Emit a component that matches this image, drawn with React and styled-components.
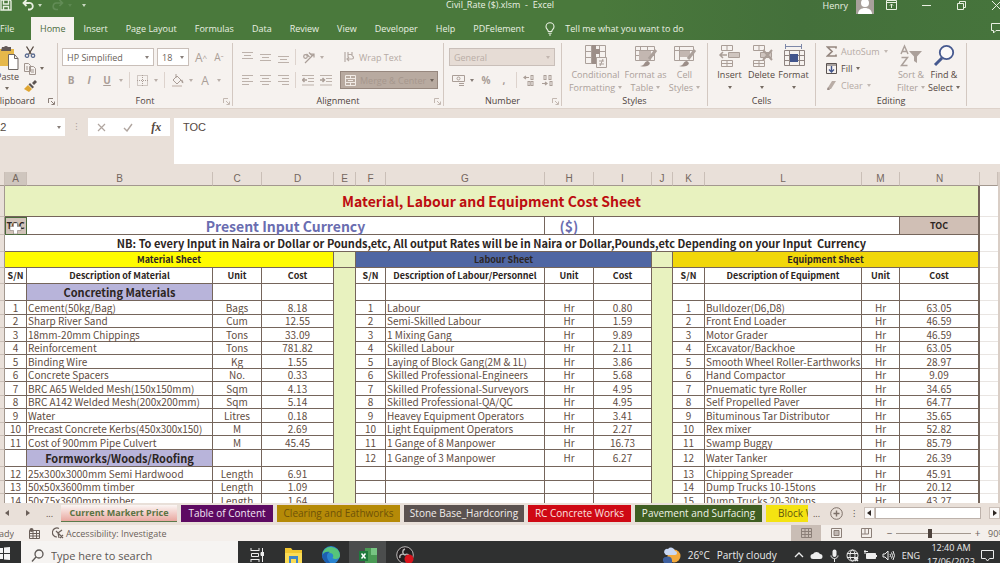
import React from 'react'
import styled, { createGlobalStyle, css } from 'styled-components'

const UI_FONT = '"Open Sans", "Noto Sans", sans-serif'
const SHEET_FONT = '"Noto Sans CJK SC", "Open Sans", sans-serif'

const TABS = ['Insert', 'Page Layout', 'Formulas', 'Data', 'Review', 'View', 'Developer', 'Help', 'PDFelement']

const COLUMNS = [
    ['A', 22], ['B', 186], ['C', 49], ['D', 72], ['E', 22], ['F', 30], ['G', 159],
    ['H', 49], ['I', 58], ['J', 21], ['K', 32], ['L', 157], ['M', 38], ['N', 80],
]

const MATERIALS = [
    ['1', 'Cement(50kg/Bag)', 'Bags', '8.18'],
    ['2', 'Sharp River Sand', 'Cum', '12.55'],
    ['3', '18mm-20mm Chippings', 'Tons', '33.09'],
    ['4', 'Reinforcement', 'Tons', '781.82'],
    ['5', 'Binding Wire', 'Kg', '1.55'],
    ['6', 'Concrete Spacers', 'No.', '0.33'],
    ['7', 'BRC A65 Welded Mesh(150x150mm)', 'Sqm', '4.13'],
    ['8', 'BRC A142 Welded Mesh(200x200mm)', 'Sqm', '5.14'],
    ['9', 'Water', 'Litres', '0.18'],
    ['10', 'Precast Concrete Kerbs(450x300x150)', 'M', '2.69'],
    ['11', 'Cost of 900mm Pipe Culvert', 'M', '45.45'],
    ['', 'Formworks/Woods/Roofing', '', ''],
    ['12', '25x300x3000mm Semi Hardwood', 'Length', '6.91'],
    ['13', '50x50x3600mm timber', 'Length', '1.09'],
    ['14', '50x75x3600mm timber', 'Length', '1.64'],
]

const LABOUR = [
    ['1', 'Labour', 'Hr', '0.80'],
    ['2', 'Semi-Skilled Labour', 'Hr', '1.59'],
    ['3', '1 Mixing Gang', 'Hr', '9.89'],
    ['4', 'Skilled Labour', 'Hr', '2.11'],
    ['5', 'Laying of Block Gang(2M & 1L)', 'Hr', '3.86'],
    ['6', 'Skilled Professional-Engineers', 'Hr', '5.68'],
    ['7', 'Skilled Professional-Surveyors', 'Hr', '4.95'],
    ['8', 'Skilled Professional-QA/QC', 'Hr', '4.95'],
    ['9', 'Heavey Equipment Operators', 'Hr', '3.41'],
    ['10', 'Light Equipment Operators', 'Hr', '2.27'],
    ['11', '1 Gange of 8 Manpower', 'Hr', '16.73'],
    ['12', '1 Gange of 3 Manpower', 'Hr', '6.27'],
]

const EQUIPMENT = [
    ['1', 'Bulldozer(D6,D8)', 'Hr', '63.05'],
    ['2', 'Front End Loader', 'Hr', '46.59'],
    ['3', 'Motor Grader', 'Hr', '46.59'],
    ['4', 'Excavator/Backhoe', 'Hr', '63.05'],
    ['5', 'Smooth Wheel Roller-Earthworks', 'Hr', '28.97'],
    ['6', 'Hand Compactor', 'Hr', '9.09'],
    ['7', 'Pnuematic tyre Roller', 'Hr', '34.65'],
    ['8', 'Self Propelled Paver', 'Hr', '64.77'],
    ['9', 'Bituminous Tar Distributor', 'Hr', '35.65'],
    ['10', 'Rex mixer', 'Hr', '52.82'],
    ['11', 'Swamp Buggy', 'Hr', '85.79'],
    ['12', 'Water Tanker', 'Hr', '26.39'],
    ['13', 'Chipping Spreader', 'Hr', '45.91'],
    ['14', 'Dump Trucks 10-15tons', 'Hr', '20.12'],
    ['15', 'Dump Trucks 20-30tons', 'Hr', '43.27'],
]

const SHEETS = [
    { name: 'Table of Content', width: 92, bg: '#5d0a62', color: '#f3e6f4' },
    { name: 'Clearing and Eathworks', width: 123, bg: '#b58a07', color: '#6e5208' },
    { name: 'Stone Base_Hardcoring', width: 120, bg: '#5b5250', color: '#f2eeec' },
    { name: 'RC Concrete Works', width: 103, bg: '#cf0914', color: '#fbe3e0' },
    { name: 'Pavement and Surfacing', width: 127, bg: '#3f5e22', color: '#eef3e6' },
]

const EMPTY = ['', '', '', '']

function Svg({ w, h, box, children, ...rest }) {
    return (
        <svg width={w} height={h} viewBox={box || `0 0 ${w} ${h}`} fill="none" stroke="currentColor" aria-hidden="true" {...rest}>
            {children}
        </svg>
    )
}

const SaveIcon = () => (
    <Svg w={12} h={12} strokeWidth="1.4">
        <path d="M1 1h9l1 1v9H1z" /><path d="M3.5 1v4h5V1M3.5 11V7.5h5V11" />
    </Svg>
)
const UndoIcon = () => (
    <Svg w={12} h={12} strokeWidth="1.8"><path d="M4.5 1 1.5 4l3 3M2 4h5a3 3 0 0 1 1 6.500H6" /></Svg>
)
const RedoIcon = () => (
    <Svg w={12} h={12} strokeWidth="1.6"><path d="m7.500 1 3 3-3 3M10 4H5a3 3 0 0 0-1 6.500h2" /></Svg>
)
const BulbIcon = () => (
    <Svg w={10} h={14} strokeWidth="1.100">
        <path d="M3.300 9.500C3.300 7.500 1 7 1 4.700a4 4 0 0 1 8 0C9 7 6.700 7.500 6.700 9.500zM3.300 11.300h3.400M4 13h2" />
    </Svg>
)
const PasteIcon = () => (
    <Svg w={20} h={25} stroke="none">
        <path d="M0 4h15v17H0z" fill="#e6b84a" />
        <path d="M3 2h2a2.500 2.500 0 0 1 4 0h3v4H2z" fill="#645a57" />
        <path d="M9.500 9.500h6l3.500 4v11H9.500z" fill="#fff" stroke="#6e6763" />
        <path d="M15.500 9.500v4H19" stroke="#6e6763" />
    </Svg>
)
const CutIcon = () => (
    <Svg w={12} h={12} strokeWidth="1.300">
        <path d="m2.500.5 5 8M9.500.5l-5 8" /><circle cx="3" cy="9.700" r="1.700" stroke="#5f6f93" /><circle cx="9" cy="9.700" r="1.700" stroke="#5f6f93" />
    </Svg>
)
const CopyIcon = () => (
    <Svg w={12} h={12} stroke="#a1958e">
        <path d="M.5.5h4l2 2v6h-6zM5.500 3.500h4l2 2v6h-6z" fill="#f5f1ee" /><path d="M2 4h2M2 6h2M7 7h3M7 9h3" />
    </Svg>
)
const BrushIcon = () => (
    <Svg w={13} h={12} stroke="none">
        <path d="m8 3 3-3 2 2-3 3z" fill="#5b5350" /><path d="m6 3 4 4-1.500 1.500-4-4z" fill="#5b5350" /><path d="m4 5 4 4-3 3-5-3z" fill="#dfa531" />
    </Svg>
)
const LauncherIcon = () => (
    <Svg w={7} h={7}><path d="M.5 5V.5H5M3 3l3 3M6.500 3.500v3h-3" /></Svg>
)
const BordersIcon = () => (
    <Svg w={11} h={11} strokeDasharray="1 1"><path d="M.5.5h10v10H.5zM5.500 0v11M0 5.500h11" /></Svg>
)
const FillColorIcon = () => (
    <Svg w={13} h={13}>
        <path d="m2 6 4-4 4 4-4 4zM5 0v4" /><path d="M10.500 6c1 1.500 1.300 2 1 3" strokeWidth="1.500" /><path d="M1 12h10" stroke="#d9cfc9" strokeWidth="2" />
    </Svg>
)
const AlignIcon = ({ lines }) => (
    <Svg w={11} h={12} stroke="#bdb2ab"><path d={lines} /></Svg>
)
const OrientIcon = () => (
    <Svg w={13} h={13} strokeWidth="1.200">
        <path d="M3 12 12 3M12 6.500V3H8.500" /><circle cx="3.500" cy="5.500" r="1.800" /><path d="m4.500 3 3 3M7 1.500l3 3" />
    </Svg>
)
const IndentIcon = ({ flip }) => (
    <Svg w={12} h={11}>
        <path d="M0 .5h12M6 3.500h6M6 6.500h6M0 10h12" stroke="#bdb2ab" /><path d={flip ? 'M0 5h4M2.500 3l2 2-2 2' : 'M5 5H1M2.500 3l-2 2 2 2'} strokeWidth="1.500" />
    </Svg>
)
const WrapIcon = () => (
    <Svg w={11} h={12} strokeWidth="1.200">
        <path d="M1 1v10M4 3.500h4M4 1v5M8 1v4M3 8h5a1.500 1.500 0 0 0 0-3M5 6 3 8l2 2" />
    </Svg>
)
const MergeIcon = () => (
    <Svg w={11} h={11} stroke="#f1ebe6"><path d="M.5.5h10v10H.5zM.5 3.500h10M.5 7.500h10M5.500 0v3.500M5.500 7.500V11M3 5.500h5" /></Svg>
)
const MoneyIcon = () => (
    <Svg w={13} h={11}>
        <path d="M.5.5h12v6H.5z" /><circle cx="6.500" cy="3.500" r="1.500" /><path d="M7 8.500h5M7 10.500h5" />
    </Svg>
)
const DecimalIcon = ({ flip }) => (
    <Svg w={12} h={11}>
        <path d={flip ? 'M1 8.500h5M4 7l2 1.500L4 10' : 'M6 2.500H1M3 1 1 2.500 3 4'} strokeWidth="1.200" />
        <rect x={flip ? 3 : 8} y=".5" width="2" height="4" /><rect x="8" y={flip ? 0.5 : 6.5} width="2" height="4" /><rect x={flip ? 9 : 5} y="6.500" width="2" height="4" />
    </Svg>
)
const ConditionalIcon = () => (
    <Svg w={24} h={24}>
        <path d="M1.500 1.500h20v18h-20zM1 7.500h20M1 13.500h20M7.500 1v19M15.500 1v19" /><path d="M8 1h4v19H8z" fill="#9c8e88" stroke="none" /><path d="M12 5h4v5h-4z" fill="#9c8e88" stroke="none" />
        <path d="M12.500 13.500h10v10h-10z" fill="#f5f1ee" /><path d="M15 17h5M15 20h5M19 15l-3 7" />
    </Svg>
)
const TableStyleIcon = () => (
    <Svg w={24} h={24}>
        <path d="M1.500 2.500h19v14h-19zM1 6.500h19M1 11.500h19M6.500 2v14M13.500 2v14" /><path d="M5 7h12v9H5z" fill="#c3b7b1" stroke="none" />
        <path d="m22 6-7 9" strokeWidth="3" /><path d="M6 22c5 0 4-5 8-5l2 2c-1 4-6 4-10 3z" fill="#9c8e88" stroke="none" />
    </Svg>
)
const CellStyleIcon = () => (
    <Svg w={24} h={24}>
        <path d="M1.500 2.500h19v14h-19zM1 6.500h19M6.500 2v14" /><path d="M7 7h10v6H7z" fill="#c3b7b1" stroke="none" />
        <path d="m22 6-7 9" strokeWidth="3" /><path d="M6 22c5 0 4-5 8-5l2 2c-1 4-6 4-10 3z" fill="#9c8e88" stroke="none" />
    </Svg>
)
const CellsIcon = ({ kind }) => (
    <Svg w={24} h={24} stroke="#aa9e97">
        <path d="M3.500 1.500h11v5h-11zM9 1v5M3.500 16.500h11v6h-11zM9 16v7M3.500 19.500h11" />
        <path d="M10.500 8.500h11v5h-11z" fill="#cfc5bf" />
        {kind === 'insert' ? <path d="M9 11H2M5 8l-3 3 3 3" strokeWidth="1.500" /> : <path d="m13 6 9 10M22 6l-9 10" strokeWidth="2" />}
    </Svg>
)
const FormatIcon = () => (
    <Svg w={24} h={24} stroke="#8f8480">
        <path d="M2.500 6.500h20v15h-20zM2 11.500h20M2 16.500h20M7.500 6v16M17.500 6v16" /><path d="M8 10h8v8H8z" fill="#42558c" stroke="none" />
        <path d="M3 2.500h17M3.500 0v5M19.500 0v5" stroke="#7d87a8" />
    </Svg>
)
const SigmaIcon = () => <Svg w={11} h={11} strokeWidth="1.700" stroke="#95877f"><path d="M10 2.500V1H1.500L6 5.500 1.500 10H10V8.500" /></Svg>
const FillDownIcon = () => (
    <Svg w={11} h={11}><path d="M.5.5h10v10H.5zM0 2h11" stroke="#5b5350" /><path d="M5.500 3v6M3 6.500 5.500 9 8 6.500" stroke="#42558c" strokeWidth="1.400" /></Svg>
)
const EraserIcon = () => <Svg w={11} h={10} stroke="none"><path d="M6 0h4L5 8H1z" fill="#b9ada6" /><path d="M2 6 4 9H1z" fill="#9c8e88" /></Svg>
const SortIcon = () => (
    <Svg w={24} h={24} strokeWidth="1.500">
        <path d="m2 10 3.500-8L9 10M3 7.500h5M2.500 13.500h6l-6 8h6" /><path d="M10 7h13l-5 5.500V19l-3-2v-4.500z" fill="currentColor" stroke="none" />
    </Svg>
)
const FindIcon = () => (
    <Svg w={24} h={24} stroke="#46598f">
        <circle cx="14.500" cy="8.500" r="6.700" strokeWidth="1.800" fill="#fbf9f8" /><path d="m10 14-7 7" strokeWidth="3" />
    </Svg>
)

function Launcher({ faded }) {
    return <LaunchButton $faded={faded} aria-label="More options"><LauncherIcon /></LaunchButton>
}

function Group({ label, width, launcher, faded, cut, children }) {
    return (
        <RibbonGroup $width={width}>
            <GroupBody>{children}</GroupBody>
            <GroupFooter $cut={cut}>
                <GroupLabel $cut={cut}>{label}</GroupLabel>
                {launcher && <Launcher faded={faded} />}
            </GroupFooter>
        </RibbonGroup>
    )
}

function Large({ icon, lines, caret = true, faded, width }) {
    return (
        <LargeButton $faded={faded} $width={width}>
            {icon}
            <span>{lines[0]}</span>
            <CaretLine>{lines[1]}{caret && <Caret />}</CaretLine>
        </LargeButton>
    )
}

function Ribbon() {
    return (
        <RibbonBar>
            <Group label="Clipboard" width={58} launcher cut>
                <PasteButton>
                    <PasteIcon />
                    <span>Paste</span>
                    <Caret />
                </PasteButton>
                <Stack>
                    <StackButton aria-label="Cut"><CutIcon /></StackButton>
                    <StackButton aria-label="Copy"><CopyIcon /><Caret /></StackButton>
                    <StackButton aria-label="Format Painter"><BrushIcon /></StackButton>
                </Stack>
            </Group>
            <Group label="Font" width={175} launcher faded>
                <Rows>
                    <ToolRow $gap={3}>
                        <SelectBox $width={92}>
                            <select aria-label="Font"><option>HP Simplified</option></select><Caret />
                        </SelectBox>
                        <SelectBox $width={32}>
                            <select aria-label="Font size"><option>18</option></select><Caret />
                        </SelectBox>
                        <Pair>
                            <Tool aria-label="Grow font"><Letter $big>A</Letter><Hat>^</Hat></Tool>
                            <Tool aria-label="Shrink font"><Letter>A</Letter><Hat>ˇ</Hat></Tool>
                        </Pair>
                    </ToolRow>
                    <ToolRow>
                        <Tool><b>B</b></Tool>
                        <Tool><b><i>I</i></b></Tool>
                        <Tool><b><u>U</u></b></Tool>
                        <Drop aria-label="Underline style"><Caret /></Drop>
                        <Rule />
                        <Tool aria-label="Borders"><BordersIcon /></Tool>
                        <Drop aria-label="Border style"><Caret /></Drop>
                        <Rule />
                        <Tool aria-label="Fill colour"><FillColorIcon /></Tool>
                        <Drop aria-label="Fill colours"><Caret /></Drop>
                        <Tool aria-label="Font colour"><Letter $big>A</Letter></Tool>
                        <Drop aria-label="Font colours"><Caret /></Drop>
                    </ToolRow>
                </Rows>
            </Group>
            <Group label="Alignment" width={211} launcher faded>
                <Rows $width={102}>
                    <ToolRow>
                        <Tool aria-label="Top align"><AlignIcon lines="M0 1.500h11M2 4.500h7M0 7.500h11" /></Tool>
                        <Tool aria-label="Middle align"><AlignIcon lines="M0 3.500h11M2 6.500h7M0 9.500h11" /></Tool>
                        <Tool aria-label="Bottom align"><AlignIcon lines="M0 5.500h11M2 8.500h7M0 11.500h11" /></Tool>
                        <Rule />
                        <Tool aria-label="Orientation"><OrientIcon /></Tool>
                        <Drop aria-label="Orientation options"><Caret /></Drop>
                    </ToolRow>
                    <ToolRow>
                        <Tool aria-label="Align left"><AlignIcon lines="M0 1.500h11M0 4.500h7M0 7.500h11M0 10.500h7" /></Tool>
                        <Tool aria-label="Centre"><AlignIcon lines="M0 1.500h11M2 4.500h7M0 7.500h11M2 10.500h7" /></Tool>
                        <Tool aria-label="Align right"><AlignIcon lines="M0 1.500h11M4 4.500h7M0 7.500h11M4 10.500h7" /></Tool>
                        <Rule />
                        <Tool aria-label="Decrease indent"><IndentIcon /></Tool>
                        <Tool aria-label="Increase indent"><IndentIcon flip /></Tool>
                    </ToolRow>
                </Rows>
                <Rows>
                    <WrapButton><WrapIcon />Wrap Text</WrapButton>
                    <MergeButton><MergeIcon /><span>Merge &amp; Center</span><Caret /></MergeButton>
                </Rows>
            </Group>
            <Group label="Number" width={118} launcher faded>
                <Rows>
                    <SelectBox $width={106} $disabled>
                        <select aria-label="Number format" disabled><option>General</option></select><Caret />
                    </SelectBox>
                    <ToolRow>
                        <Tool aria-label="Accounting"><MoneyIcon /></Tool>
                        <Drop aria-label="Currencies"><Caret $dark /></Drop>
                        <Tool><b>%</b></Tool>
                        <Tool><b>,</b></Tool>
                        <Rule />
                        <Tool aria-label="Increase decimal"><DecimalIcon /></Tool>
                        <Tool aria-label="Decrease decimal"><DecimalIcon flip /></Tool>
                    </ToolRow>
                </Rows>
            </Group>
            <Group label="Styles" width={146}>
                <Large faded width={56} icon={<ConditionalIcon />} lines={['Conditional', 'Formatting']} />
                <Large faded width={44} icon={<TableStyleIcon />} lines={['Format as', 'Table']} />
                <Large faded width={34} icon={<CellStyleIcon />} lines={['Cell', 'Styles']} />
            </Group>
            <Group label="Cells" width={108}>
                <Large width={32} icon={<CellsIcon kind="insert" />} lines={['Insert', '']} />
                <Large width={32} icon={<CellsIcon kind="delete" />} lines={['Delete', '']} />
                <Large width={32} icon={<FormatIcon />} lines={['Format', '']} />
            </Group>
            <Group label="Editing" width={151}>
                <Stack $wide>
                    <StackButton $faded><SigmaIcon />AutoSum<Caret /></StackButton>
                    <StackButton><FillDownIcon />Fill<Caret /></StackButton>
                    <StackButton $faded><EraserIcon />Clear<Caret /></StackButton>
                </Stack>
                <Large faded width={32} icon={<SortIcon />} lines={['Sort &', 'Filter']} />
                <Large width={34} icon={<FindIcon />} lines={['Find &', 'Select']} />
            </Group>
        </RibbonBar>
    )
}

function Entry({ row, last }) {
    const heading = !row[0] && row[1]
    return (
        <>
            <Cell>{row[0]}</Cell>
            {heading ? <Cell $bg="#b8b4da" $size="group">{row[1]}</Cell> : <Cell $left>{row[1]}</Cell>}
            <Cell>{row[2]}</Cell>
            <Cell $last={last}>{row[3]}</Cell>
        </>
    )
}

function Heads({ name, last }) {
    return (
        <>
            <Cell $size="head">S/N</Cell>
            <Cell $size="head">Description of {name}</Cell>
            <Cell $size="head">Unit</Cell>
            <Cell $size="head" $last={last}>Cost</Cell>
        </>
    )
}

function Sheet() {
    return (
        <SheetArea>
            <Grid>
                <colgroup>
                    <Col $width={5} />
                    {COLUMNS.map(([name, width]) => <Col key={name} $width={width} />)}
                    <col />
                </colgroup>
                <thead>
                    <Row $height={14}>
                        <Letters />
                        {COLUMNS.map(([name]) => <Letters key={name} $active={name === 'A'}>{name}</Letters>)}
                        <Letters />
                    </Row>
                </thead>
                <tbody>
                    <Row $height={31}>
                        <Edge /><Cell colSpan={14} $bg="#e8f2bf" $size="title" $last>Material, Labour and Equipment Cost Sheet</Cell><Outside />
                    </Row>
                    <Row $height={18}>
                        <Edge />
                        <Cell $bg="#d2c3b9" $size="head" $selected>TOC<CrossCursor /></Cell>
                        <Cell colSpan={6} $size="currency">Present Input Currency</Cell>
                        <Cell $size="currency">($)</Cell>
                        <Cell colSpan={5} />
                        <Cell $bg="#d0bfb5" $size="head" $last>TOC</Cell>
                        <Outside />
                    </Row>
                    <Row $height={17}>
                        <Edge />
                        <Cell colSpan={14} $size="group" $last>
                            NB: To every Input in Naira or Dollar or Pounds,etc, All output Rates will be in Naira or Dollar,Pounds,etc Depending on your Input&nbsp; Currency
                        </Cell>
                        <Outside />
                    </Row>
                    <Row $height={16}>
                        <Edge />
                        <Cell colSpan={4} $bg="#fffb00" $size="head">Material Sheet</Cell>
                        <Cell $bg="#e8f2bf" />
                        <Cell colSpan={4} $bg="#4f66a3" $size="head">Labour Sheet</Cell>
                        <Cell $bg="#e8f2bf" />
                        <Cell colSpan={4} $bg="#f1d70a" $size="head" $last>Equipment Sheet</Cell>
                        <Outside />
                    </Row>
                    <Row $height={16}>
                        <Edge />
                        <Heads name="Material" />
                        <Cell rowSpan={17} $bg="#e8f2bf" />
                        <Heads name="Labour/Personnel" />
                        <Cell rowSpan={17} $bg="#e8f2bf" />
                        <Heads name="Equipment" last />
                        <Outside />
                    </Row>
                    <Row $height={17}>
                        <Edge /><Entry row={['', 'Concreting Materials', '', '']} /><Entry row={EMPTY} /><Entry row={EMPTY} last /><Outside />
                    </Row>
                    {MATERIALS.map((row, i) => (
                        <Row key={row[1]} $height={row[0] ? (i % 2 ? 13 : 14) : 17}>
                            <Edge /><Entry row={row} /><Entry row={LABOUR[i] || EMPTY} /><Entry row={EQUIPMENT[i]} last /><Outside />
                        </Row>
                    ))}
                </tbody>
            </Grid>
        </SheetArea>
    )
}

function CrossCursor() {
    return (
        <Cursor width="13" height="13" viewBox="0 0 13 13" aria-hidden="true">
            <path d="M4.500 1h4v3.500H12v4H8.500V12h-4V8.500H1v-4h3.500z" fill="#fff" stroke="#8b817a" strokeWidth=".6" />
        </Cursor>
    )
}

function SheetTabs() {
    return (
        <TabStrip>
            <NavArrows>
                <ArrowButton aria-label="Previous sheet"><Arrow $left /></ArrowButton>
                <ArrowButton aria-label="Next sheet"><Arrow /></ArrowButton>
                <span>...</span>
            </NavArrows>
            <ActiveTab>Current Markert Price</ActiveTab>
            {SHEETS.map(s => <SheetTab key={s.name} $width={s.width} $bg={s.bg} $color={s.color}>{s.name}</SheetTab>)}
            <CutTab>Block W</CutTab>
            <TabTools>
                <span>...</span>
                <AddButton aria-label="New sheet">
                    <Svg w={13} h={13}><circle cx="6.500" cy="6.500" r="5.800" /><path d="M6.500 3.500v6M3.500 6.500h6" strokeWidth="1.400" /></Svg>
                </AddButton>
                <span>⁝</span>
            </TabTools>
            <ScrollTrack>
                <ScrollEnd aria-label="Scroll left"><Arrow $left $dark /></ScrollEnd>
                <Thumb />
                <Gap />
                <ScrollEnd aria-label="Scroll right"><Arrow $dark /></ScrollEnd>
            </ScrollTrack>
        </TabStrip>
    )
}

function StatusBar() {
    return (
        <Status>
            <CutText $width={14}>Ready</CutText>
            <MacroButton aria-label="Record macro">
                <Svg w={11} h={11}><path d="M.5 2.500h10v8H.5zM.5 5.500h10M4 3v8M7.500 3v8M.5 8h10" /><circle cx="2.500" cy="2" r="2" fill="#6a5f59" stroke="none" /></Svg>
            </MacroButton>
            <Access>
                <Svg w={12} h={12} strokeWidth="1.200"><path d="M7 1.500A4.500 4.500 0 1 0 5 10M4 4l2 2 4-3M6 6l1 5M6 6l5 5M8 11l3-3" /></Svg>
                Accessibility: Investigate
            </Access>
            <Views>
                <ViewButton $on aria-label="Normal"><Svg w={11} h={10}><path d="M.5.5h10v9H.5zM0 3.500h11M0 6.500h11M4 0v10M7.500 0v10" /></Svg></ViewButton>
                <ViewButton aria-label="Page layout"><Svg w={11} h={10}><path d="M.5.5h10v9H.5zM3 2.500h5v5H3zM3 4h5M3 6h5" /></Svg></ViewButton>
                <ViewButton aria-label="Page break"><Svg w={11} h={10}><path d="M.5.5h10v9H.5zM4 0v6M7.500 0v6M.5 6h7" /></Svg></ViewButton>
            </Views>
            <Zoom>
                <ZoomButton>−</ZoomButton>
                <ZoomSlider type="range" min="10" max="170" defaultValue="83" aria-label="Zoom" />
                <ZoomButton>+</ZoomButton>
            </Zoom>
            <ZoomText>90%</ZoomText>
        </Status>
    )
}

function Taskbar() {
    return (
        <TaskRow>
            <StartButton aria-label="Start">
                <Svg w={11} h={13} stroke="none"><path d="M0 1h3v5H0zM4 .5 10 0v6H4zM0 7h3v5H0zM4 7h6v6l-6-.5z" fill="#f4f4f4" /></Svg>
            </StartButton>
            <SearchBox>
                <Svg w={13} h={13} strokeWidth="1.300"><circle cx="8" cy="5" r="4" /><path d="m5 8-4 4.500" /></Svg>
                <input aria-label="Search" placeholder="Type here to search" />
            </SearchBox>
            <TaskApp aria-label="Task view">
                <Svg w={14} h={14}><path d="M1 2.500h8M1 11.500h8M1.500 5.500h7v3h-7zM1 0v3M9 0v3M1 11v3M9 11v3M12.500 0v14" /><path d="M11 4.500h3v3h-3z" fill="#eee" /></Svg>
            </TaskApp>
            <TaskApp aria-label="File Explorer">
                <Svg w={17} h={15} stroke="none"><path d="M0 0h6l1.500 2H17v13H0z" fill="#f1c62f" /><path d="M0 5h17v10H0z" fill="#fbdc55" /><path d="M4 8h9v7h-2v-4H6v4H4z" fill="#3f86c8" /></Svg>
            </TaskApp>
            <TaskApp aria-label="Edge">
                <Svg w={18} h={18} stroke="none">
                    <circle cx="9" cy="9" r="9" fill="#2a84cf" /><path d="M1 6a9 9 0 0 1 17 3c0 3-2 4-5 4-2 0-3-1-2-2 1-2-1-4-3-4-4 0-6 2-7 4z" fill="#56c47b" />
                    <path d="M0 10c1-4 5-5 8-4-3 1-4 4-2 8l3 4A9 9 0 0 1 0 10z" fill="#1d5fb0" />
                </Svg>
            </TaskApp>
            <TaskApp $on aria-label="Excel">
                <Svg w={18} h={15} stroke="none"><path d="M6 0h12v15H6z" fill="#4a9a55" /><path d="M12 0h6v7h-6z" fill="#77c583" /><path d="M0 3h9v10H0z" fill="#1f7a3c" /><path d="m2.500 5.500 4 5M6.500 5.500l-4 5" stroke="#fff" strokeWidth="1.500" /></Svg>
            </TaskApp>
            <TaskApp aria-label="OBS Studio">
                <Svg w={18} h={18} stroke="none">
                    <circle cx="9" cy="9" r="8.300" fill="#231f20" stroke="#b9b6b5" /><path d="M9 3c-3 1-3 5 0 6 2-2 5 0 4 3M4 12c-1-3 2-5 5-3" stroke="#b9b6b5" strokeWidth="1.400" />
                    <circle cx="13" cy="13" r="4.500" fill="#d9141c" />
                </Svg>
            </TaskApp>
            <Tray>
                <Weather>
                    <Svg w={18} h={18} stroke="none"><circle cx="11" cy="10" r="6.500" fill="#f2a93c" /><path d="M2 8a3 3 0 0 1 3-5 4 4 0 0 1 7 2 2 2 0 0 1 0 4H3z" fill="#c9d8f4" /><path d="M0 15a3 3 0 0 1 3-4 4 4 0 0 1 6 3v3H1z" fill="#3d5f9e" /></Svg>
                    <span>26°C</span><span>Partly cloudy</span>
                </Weather>
                <TrayButton aria-label="Hidden icons"><Svg w={10} h={6} strokeWidth="1.300"><path d="m1 5 4-4 4 4" /></Svg></TrayButton>
                <TrayButton aria-label="OneDrive"><Svg w={13} h={8} stroke="none"><path d="M3 8a2.500 2.500 0 0 1 0-5 4 4 0 0 1 7 0 2.500 2.500 0 0 1 0 5z" fill="#eee" /></Svg></TrayButton>
                <TrayButton aria-label="Microphone"><Svg w={9} h={13}><path d="M4.500 2.500V6" stroke="#eee" strokeWidth="4" strokeLinecap="round" /><path d="M1 6.500c0 4 7 4 7 0M4.500 10v3" /></Svg></TrayButton>
                <TrayButton aria-label="Network"><Svg w={13} h={13}><circle cx="6.500" cy="6.500" r="5.500" /><ellipse cx="6.500" cy="6.500" rx="2.500" ry="5.500" /><path d="M1 4.500h11M1 8.500h11" /><path d="m9 9 3 3M12 9l-3 3" strokeWidth="1.500" /></Svg></TrayButton>
                <TrayButton aria-label="Battery"><Svg w={13} h={10}><path d="M2.500 3.500h9v5h-9z" fill="#eee" /><path d="M0 1.500h4M1 0v4M12.500 5v2" /></Svg></TrayButton>
                <TrayButton aria-label="Volume"><Svg w={13} h={11}><path d="M1 4h2l3-3v9L3 7H1zM8 4q1 1.500 0 3M9.500 2.500q2 3 0 6M11 1q3 4.500 0 9" /></Svg></TrayButton>
                <Lang>ENG</Lang>
                <Clock><span>12:40 AM</span><span>17/06/2023</span></Clock>
                <TrayButton $wide aria-label="Notifications"><Svg w={13} h={13}><path d="M.5 1.500h12v8h-4l-2 2.500-2-2.500h-4z" /></Svg></TrayButton>
            </Tray>
        </TaskRow>
    )
}

export default function App() {
    return (
        <Screen>
            <GlobalStyle />
            <TitleBar>
                <QuickAccess>
                    <BarButton aria-label="Save"><SaveIcon /></BarButton>
                    <BarButton aria-label="Undo"><UndoIcon /><Caret /></BarButton>
                    <BarButton $dim aria-label="Redo"><RedoIcon /><Caret /></BarButton>
                    <BarButton aria-label="Customise"><Caret /></BarButton>
                </QuickAccess>
                <Title>Civil_Rate ($).xlsm&nbsp; -&nbsp; Excel</Title>
                <WindowTools>
                    <span>Henry</span>
                    <Svg w={18} h={18} stroke="none"><path d="M0 0h18v18H0z" fill="#a8a09b" /><circle cx="9" cy="7" r="4" fill="#fff" /><path d="M2 18c0-8 14-8 14 0z" fill="#fff" /></Svg>
                    <BarButton aria-label="Ribbon display"><Svg w={11} h={10}><path d="M.5.5h10v9H.5zM0 2.500h11M5.500 8V4M4 5.500 5.500 4 7 5.500" /></Svg></BarButton>
                    <BarButton aria-label="Minimise"><Svg w={9} h={9}><path d="M0 4.500h9" /></Svg></BarButton>
                    <BarButton aria-label="Restore"><Svg w={9} h={9}><path d="M.5 2.500h6v6h-6zM2.500 2V.5h6v6H7" /></Svg></BarButton>
                    <BarButton aria-label="Close"><Svg w={9} h={9}><path d="m0 0 9 9M9 0 0 9" /></Svg></BarButton>
                </WindowTools>
            </TitleBar>
            <TabRow>
                <FileTab>File</FileTab>
                <RibbonTab $active>Home</RibbonTab>
                {TABS.map(name => <RibbonTab key={name}>{name}</RibbonTab>)}
                <TellMe><BulbIcon />Tell me what you want to do</TellMe>
                <CommentButton aria-label="Comments"><Svg w={13} h={12}><path d="M.5.5h12v7H5L2.500 10V7.500h-2z" /></Svg></CommentButton>
            </TabRow>
            <Ribbon />
            <FormulaBar>
                <NameBox><input aria-label="Name box" defaultValue="A2" /><Caret $dark /></NameBox>
                <Dots>⁝</Dots>
                <FormulaTools>
                    <button aria-label="Cancel"><Svg w={9} h={9} strokeWidth="1.200"><path d="m1 1 7 7M8 1 1 8" /></Svg></button>
                    <button aria-label="Enter"><Svg w={10} h={9} strokeWidth="1.400"><path d="m1 5 3 3 5-7" /></Svg></button>
                    <FxButton><i>fx</i></FxButton>
                </FormulaTools>
                <FormulaInput aria-label="Formula" defaultValue="TOC" />
            </FormulaBar>
            <Sheet />
            <SheetTabs />
            <StatusBar />
            <Taskbar />
        </Screen>
    )
}

const GlobalStyle = createGlobalStyle`
    * {
        box-sizing: border-box;
    }

    body {
        margin: 0;
        overflow: hidden;
        font-family: ${UI_FONT};
        font-size: 9px;
        color: #55483f;
    }

    button, input, select, textarea {
        font: inherit;
        color: inherit;
        border: 0;
        margin: 0;
        padding: 0;
        background: none;
        outline: 0;
        border-radius: 0;
    }

    svg {
        flex: none;
        display: block;
    }
`

const Screen = styled.div`
    display: flex;
    flex-direction: column;
    height: 100vh;
    background: #e9e0d9;
`

const Caret = styled.span`
    flex: none;
    border: 2px solid transparent;
    border-top: 3px solid ${p => (p.$dark ? '#6a5f59' : 'currentColor')};
    border-bottom: 0;
    opacity: 0.8;
`

// title bar and ribbon tabs

const barGreen = 'linear-gradient(90deg, #4a793c 60%, #44703b 80%, #46743c)'

const TitleBar = styled.header`
    position: relative;
    z-index: 1;
    display: grid;
    grid-template-columns: 1fr auto 1fr;
    grid-template-rows: 10px;
    align-items: center;
    height: 10px;
    flex: none;
    background: ${barGreen};
    color: #e9f0e2;
`

const QuickAccess = styled.div`
    display: flex;
    align-items: center;
    gap: 10px;
`

const BarButton = styled.button`
    display: flex;
    align-items: center;
    gap: 4px;
    color: ${p => (p.$dim ? '#628c56' : '#e9f0e2')};
`

const Title = styled.span`
    line-height: 10px;
`

const WindowTools = styled.div`
    display: flex;
    align-items: center;
    justify-content: flex-end;
    margin-right: -6px;

    span {
        margin-right: 8px;
    }

    button {
        width: 35px;
        justify-content: center;
    }

    button:last-child {
        width: 19px;
        margin-left: 8px;
    }
`

const TabRow = styled.nav`
    display: flex;
    align-items: stretch;
    height: 30px;
    flex: none;
    padding-top: 7px;
    background: ${barGreen};
    color: #e9f0e2;
`

const RibbonTab = styled.button`
    padding: 0 9px;
    color: ${p => (p.$active ? '#4a6b3c' : 'inherit')};
    background: ${p => (p.$active ? '#f6f2ef' : 'none')};
`

const FileTab = styled(RibbonTab)`
    width: 31px;
    padding: 0;
    text-align: left;
`

const TellMe = styled.button`
    display: flex;
    align-items: center;
    gap: 10px;
    margin-left: 12px;
`

const CommentButton = styled.button`
    margin-left: auto;
    margin-right: -4px;
`

// ribbon

const RibbonBar = styled.div`
    display: flex;
    height: 69px;
    flex: none;
    padding: 3px 0 2px;
    background: #f6f2ef;
    border-bottom: 1px solid #ddd2ca;
    margin-bottom: 9px;
`

const RibbonGroup = styled.section`
    display: flex;
    flex-direction: column;
    flex: none;
    width: ${p => p.$width}px;
    border-right: 1px solid #d3c8c1;
`

const GroupBody = styled.div`
    display: flex;
    justify-content: center;
    height: 53px;
`

const GroupFooter = styled.div`
    position: relative;
    display: flex;
    justify-content: ${p => (p.$cut ? 'flex-start' : 'center')};
    height: 12px;
`

const GroupLabel = styled.span`
    display: flex;
    justify-content: flex-end;
    width: ${p => (p.$cut ? '35px' : 'auto')};
    line-height: 14px;
    color: #4e433d;
`

const LaunchButton = styled.button`
    position: absolute;
    right: 2px;
    top: 4px;
    color: ${p => (p.$faded ? '#c3b8b1' : '#8b7f78')};
`

const PasteButton = styled.button`
    display: flex;
    flex-direction: column;
    align-items: flex-end;
    width: 19px;
    padding-top: 2px;
    line-height: 13px;

    span:last-child {
        align-self: flex-start;
        margin: 4px 0 0 5px;
    }
`

const Stack = styled.div`
    display: flex;
    flex-direction: column;
    width: ${p => (p.$wide ? 74 : 38)}px;
`

const StackButton = styled.button`
    display: flex;
    align-items: center;
    gap: 4px;
    height: 17px;
    padding-left: 5px;
    color: ${p => (p.$faded ? '#b5aaa4' : '#55483f')};
`

const Rows = styled.div`
    display: flex;
    flex-direction: column;
    gap: 5px;
    padding-top: 5px;
    width: ${p => (p.$width ? p.$width + 'px' : 'auto')};
`

const ToolRow = styled.div`
    display: flex;
    align-items: center;
    gap: ${p => p.$gap || 0}px;
    height: 18px;
    color: #aa9e97;
`

const Pair = styled.div`
    display: flex;
`

const Tool = styled.button`
    display: flex;
    align-items: center;
    justify-content: center;
    width: 18px;
    height: 18px;
    font-size: 10px;
`

const Letter = styled.span`
    font-size: ${p => (p.$big ? 12 : 10)}px;
`

const Hat = styled.sup`
    font-size: 8px;
`

const Drop = styled.button`
    display: flex;
    justify-content: center;
    width: 10px;
`

const Rule = styled.span`
    width: 1px;
    height: 16px;
    margin: 0 3px;
    background: #ddd3cd;
`

const SelectBox = styled.label`
    display: flex;
    align-items: center;
    width: ${p => p.$width}px;
    height: 18px;
    padding: 0 4px;
    border: 1px solid #c9bfb9;
    background: ${p => (p.$disabled ? '#e6dcd5' : '#fff')};
    color: ${p => (p.$disabled ? '#b9ada6' : '#6a5f59')};

    select {
        flex: 1;
        min-width: 0;
        appearance: none;
        opacity: 1;
    }
`

const WrapButton = styled.button`
    display: flex;
    align-items: center;
    gap: 4px;
    height: 18px;
    padding-left: 4px;
    color: #b5aaa4;
`

const MergeButton = styled.button`
    display: flex;
    align-items: center;
    gap: 4px;
    width: 98px;
    height: 18px;
    padding: 0 4px;
    border: 1px solid #96877e;
    background: #b8aaa0;
    color: #a6978d;
    white-space: nowrap;

    span:last-child {
        margin-left: auto;
        color: #5b5049;
    }
`

const LargeButton = styled.button`
    display: flex;
    flex-direction: column;
    align-items: center;
    width: ${p => p.$width}px;
    padding-top: 1px;
    line-height: 13px;
    white-space: nowrap;
    color: ${p => (p.$faded ? '#aba09a' : '#55483f')};
`

const CaretLine = styled.span`
    display: flex;
    align-items: center;
    gap: 3px;
    height: 13px;
`

// formula bar

const FormulaBar = styled.div`
    display: flex;
    align-items: flex-start;
    height: 46px;
    flex: none;
    margin-bottom: 8px;
`

const NameBox = styled.label`
    display: flex;
    align-items: center;
    width: 65px;
    height: 18px;
    padding-right: 4px;
    background: #fff;
    font-family: "Liberation Sans", sans-serif;
    font-size: 11px;

    input {
        flex: 1;
        min-width: 0;
        text-indent: -7px;
    }
`

const Dots = styled.span`
    width: 23px;
    line-height: 18px;
    text-align: center;
    color: #a79b94;
`

const FormulaTools = styled.div`
    display: flex;
    align-items: center;
    justify-content: space-around;
    width: 82px;
    height: 18px;
    margin-right: 4px;
    background: #fff;
    color: #b0a59f;
`

const FxButton = styled.button`
    font-family: "Liberation Serif", serif;
    font-size: 12px;
    font-weight: bold;
    color: #55483f;
`

const FormulaInput = styled.textarea`
    flex: 1;
    align-self: stretch;
    padding: 1px 9px;
    resize: none;
    background: #fff;
    font-family: "Liberation Sans", sans-serif;
    font-size: 11px;
    line-height: 17px;
`

// worksheet

const SheetArea = styled.main`
    flex: 1;
    min-height: 0;
    overflow: hidden;
    border-right: 2px solid #d9cec6;
`

const Grid = styled.table`
    width: 100%;
    table-layout: fixed;
    border-collapse: separate;
    border-spacing: 0;
    background: #fff;
    font-family: ${SHEET_FONT};
    font-size: 10px;
    line-height: 12px;
`

const Col = styled.col`
    width: ${p => p.$width}px;
`

const Row = styled.tr`
    height: ${p => p.$height}px;
`

const Letters = styled.th`
    padding: 0;
    border-right: 1px solid #cabfb7;
    border-bottom: 1px solid #a3988f;
    background: ${p => (p.$active ? '#cfc6be' : '#e9e0d9')};
    color: #74675e;
    font-family: "Liberation Sans", sans-serif;
    font-size: 10px;
    font-weight: normal;
`

const Edge = styled.td`
    padding: 0;
    background: #e9e0d9;
    border-right: 1px solid #a3988f;
    border-bottom: 1px solid #cabfb7;
`

const Outside = styled.td`
    padding: 0;
    border-bottom: 1px solid #e9e5e2;
`

const sizes = {
    title: css`
        font-size: 14px;
        font-weight: bold;
        color: #bd0d10;
    `,
    currency: css`
        font-size: 14px;
        font-weight: bold;
        color: #6a6db0;
    `,
    group: css`
        font-size: 11px;
        font-weight: bold;
        color: #2c2522;
    `,
    head: css`
        font-size: 9px;
        font-weight: bold;
        color: #2c2522;
    `,
}

const Cell = styled.td`
    padding: 0 ${p => (p.$left ? 1 : 0)}px;
    border-right: ${p => (p.$last ? 2 : 1)}px solid #75655b;
    border-bottom: 1px solid #75655b;
    background: ${p => p.$bg || '#fff'};
    text-align: ${p => (p.$left ? 'left' : 'center')};
    white-space: nowrap;
    color: #5f4d42;
    ${p => sizes[p.$size]}
    ${p => p.$selected && css`
        position: relative;
        outline: 1px solid #4a6b3c;
        outline-offset: -1px;
    `}
`

const Cursor = styled.svg`
    position: absolute;
    left: 4px;
    top: 5px;
`

// sheet tabs

const TabStrip = styled.div`
    display: flex;
    align-items: center;
    gap: 4px;
    height: 22px;
    flex: none;
    padding-bottom: 2px;
    background: #e9e0d9;
`

const NavArrows = styled.div`
    display: flex;
    align-items: center;
    justify-content: space-between;
    width: 57px;
    padding: 0 4px 0 3px;
`

const ArrowButton = styled.button`
    display: flex;
    padding: 2px;
`

const Arrow = styled.span`
    border: 3px solid transparent;
    ${p => (p.$left
        ? css`border-right: 4px solid ${p.$dark ? '#2c2522' : '#6a5f59'}; border-left: 0;`
        : css`border-left: 4px solid ${p.$dark ? '#2c2522' : '#6a5f59'}; border-right: 0;`)}
`

const SheetTab = styled.button`
    flex: none;
    width: ${p => p.$width}px;
    height: 17px;
    background: ${p => p.$bg};
    color: ${p => p.$color};
    font-size: 10px;
    white-space: nowrap;
`

const ActiveTab = styled(SheetTab)`
    width: 116px;
    background: linear-gradient(#fbf6f4, #e9a79f);
    border-bottom: 1px solid #5c7a4b;
    color: #5a7343;
    font-weight: bold;
    font-size: 9px;
`

const CutTab = styled(SheetTab)`
    width: 42px;
    padding-left: 12px;
    overflow: hidden;
    text-align: left;
    background: #f4e311;
    color: #5e5410;
`

const TabTools = styled.div`
    display: flex;
    align-items: center;
    gap: 10px;
    padding-left: 1px;
`

const AddButton = styled.button`
    color: #7d7068;
`

const ScrollTrack = styled.div`
    display: flex;
    flex: 1;
    margin-left: 4px;
    height: 12px;
`

const ScrollEnd = styled.button`
    display: flex;
    align-items: center;
    justify-content: center;
    width: 11px;
    background: #fbf9f8;
    border: 1px solid #cbc0b9;
`

const Thumb = styled.div`
    flex: 1;
    background: #fff;
    border: 1px solid #bdb2ab;
`

const Gap = styled.span`
    width: 8px;
`

// status bar

const Status = styled.footer`
    display: flex;
    align-items: center;
    height: 16px;
    flex: none;
    background: #f4efeb;
    color: #6a5f59;
`

const CutText = styled.span`
    display: flex;
    justify-content: flex-end;
    width: ${p => p.$width}px;
    overflow: hidden;
`

const MacroButton = styled.button`
    margin-left: 15px;
`

const Access = styled.button`
    display: flex;
    align-items: center;
    gap: 2px;
    margin-left: 12px;
`

const Views = styled.div`
    display: flex;
    align-self: stretch;
    margin-left: auto;
`

const ViewButton = styled.button`
    display: flex;
    align-items: center;
    justify-content: center;
    width: 30px;
    background: ${p => (p.$on ? '#c9bdb5' : 'none')};
    color: #8b7f78;
`

const Zoom = styled.div`
    display: flex;
    align-items: center;
    gap: 2px;
    margin-left: 4px;
`

const ZoomButton = styled.button`
    width: 9px;
    font-size: 10px;
`

const ZoomSlider = styled.input`
    appearance: none;
    width: 75px;
    height: 9px;
    background: linear-gradient(#a3988f, #a3988f) center / 100% 1px no-repeat;

    &::-webkit-slider-thumb {
        appearance: none;
        width: 4px;
        height: 9px;
        background: #4e433d;
    }
`

const ZoomText = styled.span`
    width: 12px;
    margin-left: 6px;
    flex: none;
    white-space: nowrap;
`

// taskbar

const TaskRow = styled.footer`
    display: flex;
    height: 22px;
    flex: none;
    overflow: hidden;
    background: #2f3030;
    color: #ececec;
`

const StartButton = styled.button`
    width: 21px;
    padding-top: 2px;
`

const SearchBox = styled.label`
    display: flex;
    align-items: center;
    gap: 7px;
    width: 217px;
    height: 28px;
    padding-left: 10px;
    background: #f6f4f2;
    color: #5c5754;
    font-size: 11px;

    input::placeholder {
        color: #5c5754;
        opacity: 1;
    }
`

const TaskApp = styled.button`
    display: flex;
    align-items: center;
    justify-content: center;
    width: 37px;
    height: 28px;
    background: ${p => (p.$on ? '#4b4d4d' : 'none')};
`

const Tray = styled.div`
    display: flex;
    align-items: center;
    height: 28px;
    margin-left: auto;
`

const Weather = styled.button`
    display: flex;
    align-items: center;
    gap: 7px;
    margin-right: 13px;
    font-size: 10px;
`

const TrayButton = styled.button`
    display: flex;
    justify-content: center;
    width: ${p => (p.$wide ? 26 : 18)}px;
`

const Lang = styled.span`
    margin: 0 8px 0 4px;
    font-size: 9px;
`

const Clock = styled.span`
    display: flex;
    flex-direction: column;
    align-items: center;
    width: 46px;
    font-size: 9px;
    line-height: 14px;
`
